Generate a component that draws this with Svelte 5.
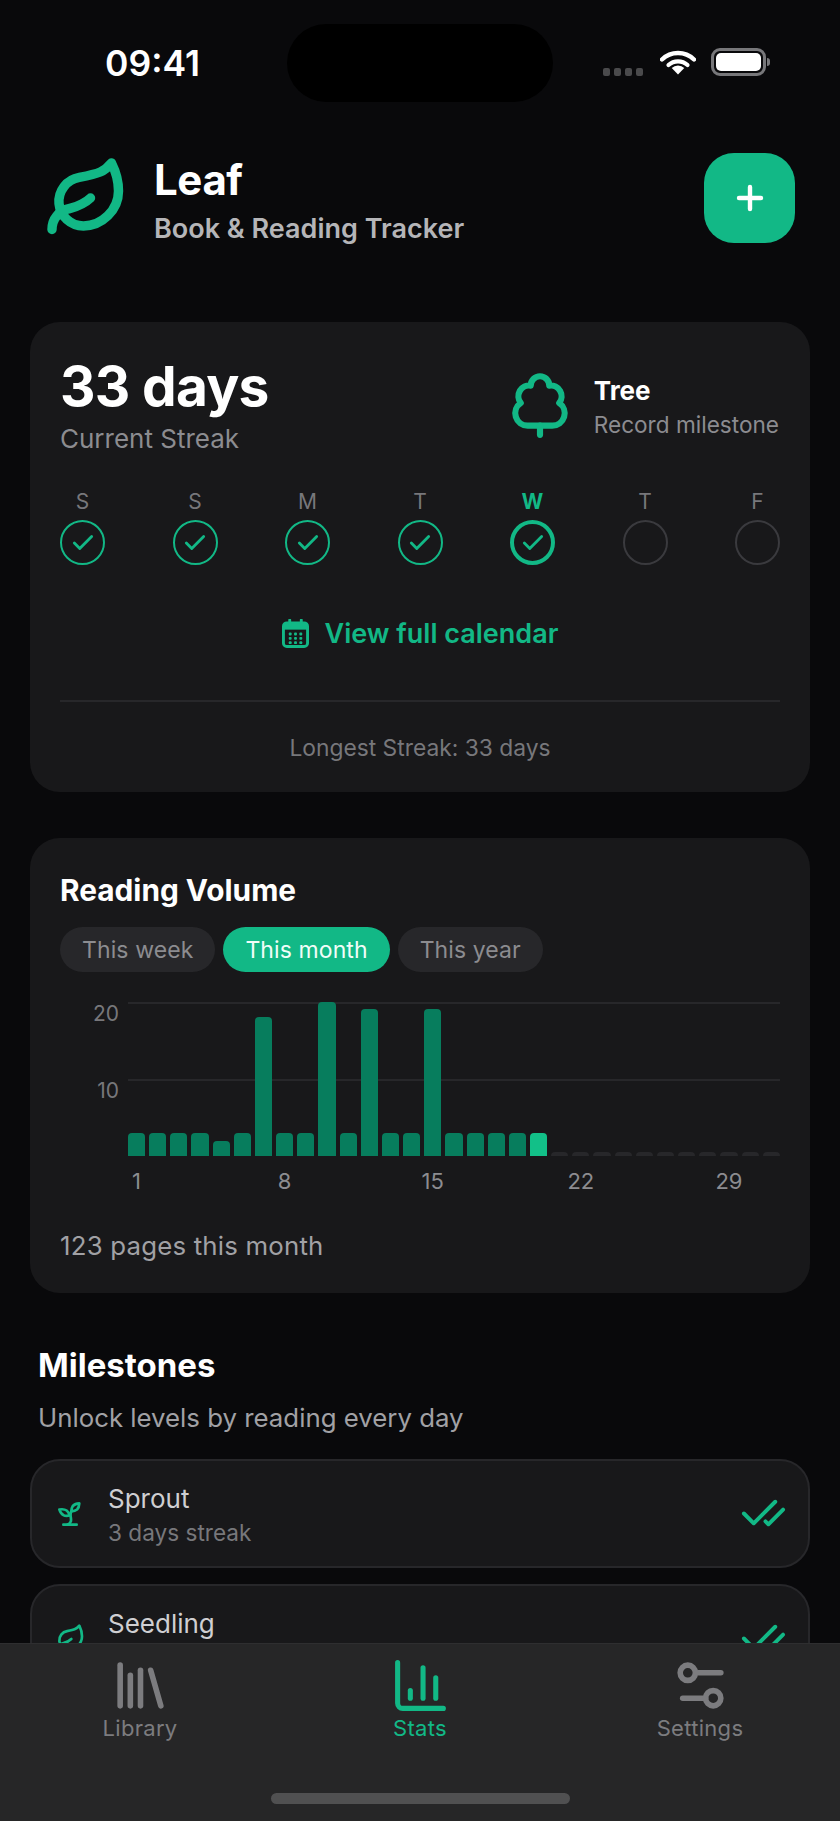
<script>
  const days = [
    { l: 'S', done: true }, { l: 'S', done: true }, { l: 'M', done: true }, { l: 'T', done: true },
    { l: 'W', done: true, today: true }, { l: 'T' }, { l: 'F' }
  ];
  const pills = ['This week', 'This month', 'This year'];
  const h = [23,23,23,23,15,23,139,23,23,154,23,147,23,23,147,23,23,23,23,23,4,4,4,4,4,4,4,4,4,4,4];
  const bars = h.map((v, i) => ({ v, kind: i === 19 ? 'today' : i > 19 ? 'future' : 'past' }));
  const ticks = [1, 8, 15, 22, 29];
</script>

<div class="phone">
  <div class="status">
    <span class="time">09:41</span>
    <div class="island"></div>
    <div class="sys">
      <div class="signal"><i></i><i></i><i></i><i></i></div>
      <svg class="wifi" viewBox="0 0 36 26" width="36" height="26"><path d="M2 10.5a23 23 0 0 1 32 0" fill="none" stroke="#fff" stroke-width="4.4" stroke-linecap="round"/><path d="M8.5 16a14 14 0 0 1 19 0" fill="none" stroke="#fff" stroke-width="4.2" stroke-linecap="round"/><path d="M18 25.5l-6.3-6.4a9 9 0 0 1 12.6 0z" fill="#fff"/></svg>
      <div class="batt"><div class="fill"></div></div>
      <div class="nub"></div>
    </div>
  </div>

  <header class="head">
    <svg class="logo" viewBox="0 0 24 24" fill="none" stroke="#12b886" stroke-width="2.7" stroke-linecap="round" stroke-linejoin="round"><path d="M11 20A7 7 0 0 1 9.8 6.1C15.5 5 17 4.48 19 2c1 2 2 4.18 2 8 0 5.5-4.78 10-10 10Z"/><path d="M2 21c0-3 1.85-5.36 5.08-6C9.5 14.52 12 13 13 12"/></svg>
    <div class="brand">
      <div class="name">Leaf</div>
      <div class="tag">Book &amp; Reading Tracker</div>
    </div>
    <div class="add"><svg viewBox="0 0 28 28" width="28" height="28" fill="none" stroke="#fff" stroke-width="4.4" stroke-linecap="round"><path d="M14 3v22M3 14h22"/></svg></div>
  </header>

  <section class="card streak">
    <div class="top">
      <div>
        <div class="big">33 days</div>
        <div class="cur">Current Streak</div>
      </div>
      <div class="ms">
        <svg class="tree" viewBox="0 0 24 24" fill="none" stroke="#12b886" stroke-width="2" stroke-linecap="round" stroke-linejoin="round"><path d="M8 19a4 4 0 0 1-2.24-7.32A3.5 3.5 0 0 1 9 6.03V6a3 3 0 1 1 6 0v.04a3.5 3.5 0 0 1 3.24 5.65A4 4 0 0 1 16 19Z"/><path d="M12 19v3"/></svg>
        <div class="ms-b">
          <div class="ms-t">Tree</div>
          <div class="ms-s">Record milestone</div>
        </div>
      </div>
    </div>
    <div class="days">
      {#each days as d}
        <div class="day">
          <span class="dl" class:now={d.today}>{d.l}</span>
          <div class="ring" class:done={d.done} class:now={d.today}>
            {#if d.done}<svg viewBox="0 0 24 24" width="26" height="26" fill="none" stroke="#12b886" stroke-width="2.6" stroke-linecap="round" stroke-linejoin="round"><path d="M20 6 9 17l-5-5"/></svg>{/if}
          </div>
        </div>
      {/each}
    </div>
    <div class="cal">
      <svg viewBox="0 0 28 30" width="27" height="29"><rect x="1.5" y="4" width="25" height="24.5" rx="3.5" fill="none" stroke="#12b886" stroke-width="3"/><rect x="2" y="5" width="24" height="6" fill="#12b886"/><path d="M8 1v6M20 1v6" stroke="#12b886" stroke-width="3" stroke-linecap="round"/><g fill="#12b886"><rect x="7" y="14" width="3" height="3" rx="1"/><rect x="12.5" y="14" width="3" height="3" rx="1"/><rect x="18" y="14" width="3" height="3" rx="1"/><rect x="7" y="18.5" width="3" height="3" rx="1"/><rect x="12.5" y="18.5" width="3" height="3" rx="1"/><rect x="18" y="18.5" width="3" height="3" rx="1"/><rect x="7" y="23" width="3" height="3" rx="1"/><rect x="12.5" y="23" width="3" height="3" rx="1"/><rect x="18" y="23" width="3" height="3" rx="1"/></g></svg>
      <span>View full calendar</span>
    </div>
    <div class="rule"></div>
    <div class="longest">Longest Streak: 33 days</div>
  </section>

  <section class="card volume">
    <h2>Reading Volume</h2>
    <div class="pills">
      {#each pills as p, i}<span class="pill" class:on={i === 1}>{p}</span>{/each}
    </div>
    <div class="chart">
      <div class="yaxis"><span>20</span><span>10</span></div>
      <div class="plot">
        <div class="grid g1"></div>
        <div class="grid g2"></div>
        <div class="bars">
          {#each bars as b}<div class="bar {b.kind}" style="height:{b.v}px"></div>{/each}
        </div>
        <div class="xaxis">
          {#each bars as b, i}<div class="xc">{#if ticks.includes(i + 1)}<span>{i + 1}</span>{/if}</div>{/each}
        </div>
      </div>
    </div>
    <div class="pages">123 pages this month</div>
  </section>

  <section class="miles">
    <h2>Milestones</h2>
    <p>Unlock levels by reading every day</p>
    <div class="row">
      <svg class="ri" viewBox="0 0 24 24" fill="none" stroke="#12b886" stroke-width="2" stroke-linecap="round" stroke-linejoin="round"><path d="M7 20h10"/><path d="M10 20c5.5-2.5.8-6.4 3-10"/><path d="M9.5 9.4c1.1.8 1.8 2.2 2.3 3.7-2 .4-3.5.4-4.8-.3-1.2-.6-2.3-1.9-3-4.2 2.8-.5 4.4 0 5.5.8z"/><path d="M14.1 6a7 7 0 0 0-1.1 4c1.9-.1 3.3-.6 4.3-1.4 1-1 1.6-2.3 1.7-4.6-2.7.1-4 1-4.9 2z"/></svg>
      <div class="rt"><div class="rn">Sprout</div><div class="rs">3 days streak</div></div>
      <svg class="cc" viewBox="0 0 24 24" fill="none" stroke="#12b886" stroke-width="2" stroke-linecap="round" stroke-linejoin="round"><path d="M18 6 7 17l-5-5"/><path d="m22 10-7.5 7.5L13 16"/></svg>
    </div>
    <div class="row">
      <svg class="ri" viewBox="0 0 24 24" fill="none" stroke="#12b886" stroke-width="2" stroke-linecap="round" stroke-linejoin="round"><path d="M11 20A7 7 0 0 1 9.8 6.1C15.5 5 17 4.48 19 2c1 2 2 4.18 2 8 0 5.5-4.78 10-10 10Z"/><path d="M2 21c0-3 1.85-5.36 5.08-6C9.5 14.52 12 13 13 12"/></svg>
      <div class="rt"><div class="rn">Seedling</div><div class="rs">7 days streak</div></div>
      <svg class="cc" viewBox="0 0 24 24" fill="none" stroke="#12b886" stroke-width="2" stroke-linecap="round" stroke-linejoin="round"><path d="M18 6 7 17l-5-5"/><path d="m22 10-7.5 7.5L13 16"/></svg>
    </div>
  </section>

  <nav class="tabs">
    <div class="tab">
      <svg viewBox="0 0 24 24" fill="none" stroke="currentColor" stroke-width="2.2" stroke-linecap="round" stroke-linejoin="round"><path d="m16 6 4 14"/><path d="M12 6v14"/><path d="M8 8v12"/><path d="M4 4v16"/></svg>
      <span>Library</span>
    </div>
    <div class="tab act">
      <svg viewBox="0 0 24 24" fill="none" stroke="currentColor" stroke-width="2" stroke-linecap="round" stroke-linejoin="round"><path d="M3 3v16a2 2 0 0 0 2 2h16"/><path d="M18 17V9"/><path d="M13 17V5"/><path d="M8 17v-3"/></svg>
      <span>Stats</span>
    </div>
    <div class="tab">
      <svg viewBox="0 0 24 24" fill="none" stroke="currentColor" stroke-width="2.2" stroke-linecap="round" stroke-linejoin="round"><path d="M20 7h-9"/><path d="M14 17H5"/><circle cx="17" cy="17" r="3"/><circle cx="7" cy="7" r="3"/></svg>
      <span>Settings</span>
    </div>
    <div class="home"></div>
  </nav>
</div>

<style>
  :global(body) { margin: 0; background: #09090b; }
  .phone {
    position: relative; width: 840px; height: 1821px; overflow: hidden;
    background: #09090b; color: #fff;
    font-family: Inter, "Liberation Sans", sans-serif;
  }
  .status { display: flex; align-items: flex-start; height: 102px; padding-top: 24px; box-sizing: border-box; }
  .time { width: 287px; box-sizing: border-box; padding: 20px 0 0 105px; font-size: 35.5px; line-height: 40px; font-weight: 600; }
  .island { width: 266px; height: 78px; border-radius: 39px; background: #000; }
  .sys { display: flex; align-items: flex-start; padding: 26px 0 0 50px; position: relative; }
  .signal { display: flex; gap: 4px; margin-top: 18px; }
  .signal i { width: 7px; height: 8px; border-radius: 2px; background: #4a4a4c; }
  .wifi { margin-left: 17px; margin-top: -1px; }
  .batt { box-sizing: border-box; width: 55px; height: 28px; margin-left: 15px; margin-top: -2px; border: 3px solid #77777a; border-radius: 9px; padding: 2px; }
  .fill { height: 100%; background: #fff; border-radius: 5px; }
  .nub { width: 3px; height: 8px; margin-top: 8px; margin-left: 1px; background: #77777a; border-radius: 0 3px 3px 0; }

  .head { display: flex; align-items: center; height: 92px; margin-top: 50px; padding: 0 45px 0 45px; }
  .logo { width: 84px; height: 84px; flex: none; }
  .brand { margin-left: 25px; flex: 1; padding-top: 4px; }
  .name { font-size: 42px; line-height: 50px; font-weight: 700; letter-spacing: -0.4px; }
  .tag { font-size: 27px; line-height: 32px; font-weight: 600; color: #b5b5b8; margin-top: 8px; }
  .add { width: 91px; height: 90px; border-radius: 30px; background: #12b886; display: flex; align-items: center; justify-content: center; }

  .card { background: #18181a; border-radius: 30px; margin: 0 30px; box-sizing: border-box; padding: 0 30px; }
  .streak { margin-top: 78px; height: 470px; padding-top: 34px; }
  .top { display: flex; justify-content: space-between; }
  .big { font-size: 55px; line-height: 60px; font-weight: 700; letter-spacing: -0.7px; }
  .cur { font-size: 26px; line-height: 32px; color: #8c8c90; margin-top: 7px; }
  .ms { display: flex; align-items: center; padding-top: 6px; height: 84px; margin-right: 1px; }
  .tree { width: 74px; height: 74px; margin-right: 17px; flex: none; }
  .ms-b { padding-top: 6px; }
  .ms-t { font-size: 26px; line-height: 32px; font-weight: 700; }
  .ms-s { font-size: 22.6px; line-height: 30px; color: #8c8c90; margin-top: 3px; }

  .days { display: flex; justify-content: space-between; margin-top: 33px; }
  .day { display: flex; flex-direction: column; align-items: center; width: 45px; }
  .dl { font-size: 21px; line-height: 28px; color: #77777b; height: 28px; }
  .dl.now { color: #12b886; font-weight: 700; }
  .ring { box-sizing: border-box; width: 45px; height: 45px; border-radius: 50%; border: 2px solid #3a3a3e; display: flex; align-items: center; justify-content: center; margin-top: 4px; }
  .ring.done { border-color: #12b886; }
  .ring.now { border-width: 4px; }

  .cal { display: flex; align-items: center; justify-content: center; gap: 16px; margin-top: 52px; height: 32px; color: #12b886; font-size: 27px; font-weight: 600; }
  .rule { height: 2px; background: #27272a; margin-top: 51px; }
  .longest { text-align: center; font-size: 22.8px; line-height: 30px; color: #77777b; margin-top: 31px; }

  .volume { margin-top: 46px; height: 455px; padding-top: 34px; }
  .volume h2 { margin: 0; font-size: 29.8px; line-height: 36px; font-weight: 700; }
  .pills { display: flex; gap: 8px; margin-top: 19px; }
  .pill { height: 45px; padding: 0 22px; border-radius: 23px; background: #27272a; color: #8c8c90; font-size: 23px; line-height: 47px; letter-spacing: 0.1px; }
  .pill.on { background: #12b886; color: #f0fdf8; }

  .chart { position: relative; display: flex; margin-top: 30px; }
  .yaxis { width: 68px; position: relative; height: 154px; color: #77777b; font-size: 21px; }
  .yaxis span { position: absolute; right: 9px; line-height: 26px; }
  .yaxis span:nth-child(1) { top: -1px; }
  .yaxis span:nth-child(2) { top: 76px; }
  .plot { position: relative; flex: 1; }
  .grid { position: absolute; left: 0; right: 0; height: 2px; background: #27272a; }
  .g1 { top: 0; }
  .g2 { top: 77px; }
  .bars { position: relative; display: flex; align-items: flex-end; gap: 4px; height: 154px; }
  .bar { flex: 1 1 0; border-radius: 4px 4px 0 0; background: #077d5d; }
  .bar.today { background: #12c088; }
  .bar.future { background: #27272a; }
  .xaxis { display: flex; gap: 4px; margin-top: 11px; }
  .xc { flex: 1 1 0; min-width: 0; display: flex; justify-content: center; height: 28px; color: #8c8c90; font-size: 22px; line-height: 28px; white-space: nowrap; }

  .pages { margin-top: 35px; font-size: 25.8px; line-height: 32px; color: #a1a1a5; letter-spacing: 0.2px; }

  .miles { margin: 52px 30px 0; }
  .miles h2 { margin: 0 0 0 8px; font-size: 33px; line-height: 40px; font-weight: 700; }
  .miles p { margin: 17px 0 0 8px; font-size: 25.8px; line-height: 32px; color: #a1a1a5; }
  .row { box-sizing: border-box; height: 109px; margin-top: 16px; border: 2px solid #27272a; border-radius: 30px; background: #18181a; display: flex; align-items: center; padding: 0 22px; }
  .miles p + .row { margin-top: 25px; }
  .ri { width: 32px; height: 32px; flex: none; }
  .rt { flex: 1; margin-left: 22px; padding-top: 3px; }
  .rn { font-size: 26px; line-height: 32px; color: #cfcfd2; }
  .rs { font-size: 22.6px; line-height: 30px; color: #77777b; margin-top: 3px; }
  .cc { width: 47px; height: 47px; flex: none; margin-right: -1px; }

  .tabs { position: absolute; left: 0; right: 0; bottom: 0; height: 178px; background: #262627; border-top: 1px solid #2e2e30; box-sizing: border-box; display: flex; }
  .tab { width: 280px; display: flex; flex-direction: column; align-items: center; color: #7c7c7f; padding-top: 11px; font-size: 22px; letter-spacing: 0.3px; }
  .tab svg { width: 61px; height: 61px; }
  .tab span { line-height: 28px; margin-top: -2px; }
  .tab.act { color: #12b886; }
  .home { position: absolute; left: 271px; top: 149px; width: 299px; height: 11px; border-radius: 6px; background: #505051; }
</style>
